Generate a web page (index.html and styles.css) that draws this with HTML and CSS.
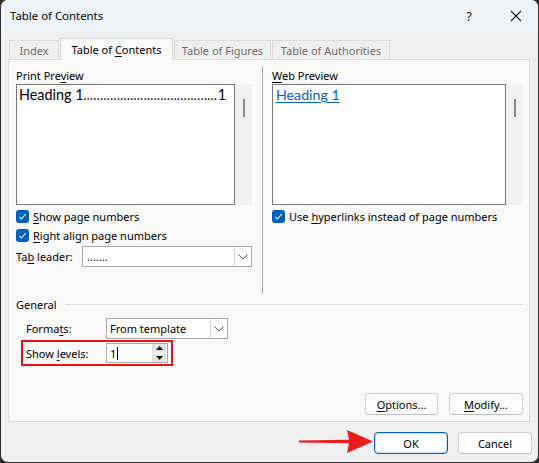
FILE: index.html
```html
<!DOCTYPE html>
<html>
<head>
<meta charset="utf-8">
<link rel="stylesheet" href="styles.css">
</head>
<body>
<div class="dialog">
  <div class="titlebar">
    <span class="title">Table of Contents</span>
    <span class="tb-buttons">
      <span class="help">?</span>
      <svg class="close" width="12" height="12" viewBox="0 0 12 12"><path d="M1 1 L11 11 M11 1 L1 11" stroke="#1a1a1a" stroke-width="1.1" fill="none"/></svg>
    </span>
  </div>
  <div class="content">
    <div class="tabs">
      <div class="tab t1"><span>Index</span></div>
      <div class="tab sel"><span>Table of <u>C</u>ontents</span></div>
      <div class="tab t3"><span>Table of Figures</span></div>
      <div class="tab t4"><span>Table of Authorities</span></div>
    </div>
    <div class="panel">
      <div class="top">
        <div class="col left">
          <div class="label">Print Pre<u>v</u>iew</div>
          <div class="preview">
            <div class="pbox">
              <div class="toc-line"><span>Heading 1</span><span class="dots">........................................</span><span>1</span></div>
            </div>
            <div class="track"><div class="thumb"></div></div>
          </div>
          <div class="check first"><span class="cb"><svg width="9" height="9" viewBox="0 0 9 9"><path d="M1.2 4.8 L3.4 7 L7.8 2" stroke="#fff" stroke-width="1.1" fill="none"/></svg></span><span><u>S</u>how page numbers</span></div>
          <div class="check"><span class="cb"><svg width="9" height="9" viewBox="0 0 9 9"><path d="M1.2 4.8 L3.4 7 L7.8 2" stroke="#fff" stroke-width="1.1" fill="none"/></svg></span><span><u>R</u>ight align page numbers</span></div>
          <div class="row leader">
            <span class="rlabel">Ta<u>b</u> leader:</span>
            <div class="select wide"><span class="val">.......</span><span class="dd"><svg width="10" height="6" viewBox="0 0 10 6"><path d="M0.5 0.5 L5 5 L9.5 0.5" stroke="#555" stroke-width="1" fill="none"/></svg></span></div>
          </div>
        </div>
        <div class="vsep"></div>
        <div class="col right">
          <div class="label"><u>W</u>eb Preview</div>
          <div class="preview">
            <div class="pbox wbox"><span class="link">Heading 1</span></div>
            <div class="track"><div class="thumb"></div></div>
          </div>
          <div class="check first"><span class="cb"><svg width="9" height="9" viewBox="0 0 9 9"><path d="M1.2 4.8 L3.4 7 L7.8 2" stroke="#fff" stroke-width="1.1" fill="none"/></svg></span><span>Use <u>h</u>yperlinks instead of page numbers</span></div>
        </div>
      </div>
      <div class="general">
        <span class="glabel">General</span><span class="gline"></span>
      </div>
      <div class="row formats">
        <span class="flabel">Forma<u>t</u>s:</span>
        <div class="select fsel"><span class="val">From template</span><span class="dd"><svg width="10" height="6" viewBox="0 0 10 6"><path d="M0.5 0.5 L5 5 L9.5 0.5" stroke="#555" stroke-width="1" fill="none"/></svg></span></div>
      </div>
      <div class="levels">
        <span class="llabel">Show <u>l</u>evels:</span>
        <div class="spin">
          <span class="sval">1<span class="caret"></span></span>
          <span class="sbtns">
            <span class="sb"><svg width="7" height="4" viewBox="0 0 7 4"><path d="M0 4 L3.5 0 L7 4 Z" fill="#111"/></svg></span>
            <span class="sb"><svg width="7" height="4" viewBox="0 0 7 4"><path d="M0 0 L3.5 4 L7 0 Z" fill="#111"/></svg></span>
          </span>
        </div>
      </div>
      <div class="pbuttons">
        <span class="btn opt"><span><u>O</u>ptions...</span></span>
        <span class="btn mod"><span><u>M</u>odify...</span></span>
      </div>
    </div>
    <div class="footer">
      <span class="btn ok">OK</span>
      <span class="btn cancel">Cancel</span>
    </div>
  </div>
  <svg class="arrow" width="76" height="24" viewBox="0 0 76 24"><path d="M0 10.6 L50 9.8 L48 0 L74 11.5 L48 23 L50 13.2 L0 12.4 Z" fill="#ee1c1c"/></svg>
</div>
</body>
</html>
```
FILE: styles.css
```css
* { box-sizing: border-box; }
html, body { margin: 0; padding: 0; }
body {
  background: #2e2e2e;
  width: 539px;
  height: 463px;
  overflow: hidden;
  font-family: "Noto Sans", sans-serif;
  font-size: 11px;
  color: #000;
}
u { text-decoration: underline; text-underline-offset: 2px; }
.dialog {
  position: relative;
  margin-left: 1px;
  width: 537px;
  height: 462px;
  background: #f0f0f0;
  border-radius: 7px;
  overflow: hidden;
}
.titlebar {
  height: 33px;
  background: #eef3f8;
  display: flex;
  align-items: center;
  justify-content: space-between;
  padding-left: 9px;
  padding-right: 16px;
  padding-bottom: 2px;
}
.title { font-size: 11.4px; color: #000; }
.tb-buttons { display: flex; align-items: center; }
.help { font-size: 13px; color: #1a1a1a; margin-right: 38px; }
.content { padding: 5px 0 0 0; }
.tabs {
  display: flex;
  padding-left: 8px;
  height: 21px;
  align-items: flex-end;
  position: relative;
  z-index: 2;
}
.tab {
  height: 19px;
  border: 1px solid #dcdcdc;
  border-bottom: none;
  background: #f0f0f0;
  color: #6d6d6d;
  display: flex;
  align-items: center;
  justify-content: center;
  margin-right: 1px;
  white-space: nowrap;
}
.t1 { width: 50px; }
.tab.sel {
  width: 113px;
  height: 22px;
  background: #f9f9f9;
  color: #000;
  margin-bottom: -1px;
  padding-bottom: 1px;
}
.t3 { width: 97px; }
.t4 { width: 118px; }
.panel {
  margin-left: 7px;
  width: 522px;
  height: 363px;
  border: 1px solid #dcdcdc;
  background: #f9f9f9;
  padding: 8px 0 0 7px;
}
.top { display: flex; height: 226px; }
.col.left { width: 236px; }
.col.right { width: 251px; margin-left: 9px; }
.vsep { width: 1px; background: #a9a9a9; margin-left: 10px; margin-top: -1px; height: 226px; }
.label { height: 16px; line-height: 15px; }
.preview { display: flex; height: 121px; }
.pbox {
  flex: 1;
  border: 1px solid #767676;
  background: #fff;
  padding: 1px 0 0 2px;
}
.track { width: 17px; background: #f0f0f0; position: relative; }
.thumb { position: absolute; left: 8px; top: 15px; width: 2px; height: 18px; background: #8a8a8a; }
.toc-line {
  display: flex;
  font-family: Lato, "Noto Sans", sans-serif;
  font-size: 14.4px;
  line-height: 18px;
  width: 207px;
  white-space: nowrap;
  justify-content: space-between;
}
.dots { letter-spacing: -0.05px; color: #3a2a1a; margin-left: -1px; }
.wbox { padding: 1px 0 0 3px; }
.link {
  font-family: Lato, "Noto Sans", sans-serif;
  font-size: 14.2px;
  line-height: 18px;
  color: #0563c1;
  text-decoration: underline;
  text-underline-offset: 2px;
}
.check { display: flex; align-items: center; height: 13px; margin-top: 6px; }
.check.first { margin-top: 5px; }
.cb {
  width: 13px; height: 13px;
  background: #005fb8;
  border-radius: 3px;
  display: flex; align-items: center; justify-content: center;
  margin-right: 4px;
}
.row { display: flex; align-items: center; }
.leader { margin-top: 4px; height: 21px; }
.rlabel { width: 66px; }
.select {
  height: 21px;
  border: 1px solid #a8a8a8;
  background: #fff;
  display: flex;
  align-items: center;
}
.select .val { flex: 1; padding-left: 3px; }
.dd {
  width: 17px; height: 19px;
  border-left: 1px solid #d6d6d6;
  display: flex; align-items: center; justify-content: center;
}
.wide { width: 170px; }
.wide .val { padding-left: 4px; line-height: 10px; }
.general { display: flex; align-items: center; height: 14px; margin-top: 3px; }
.glabel { margin-right: 8px; }
.gline { flex: 1; height: 1px; background: #dcdcdc; margin-right: 6px; }
.formats { margin-top: 7px; height: 21px; padding-left: 10px; }
.flabel { width: 80px; }
.fsel { width: 122px; }
.fsel .val { padding-left: 3px; }
.levels {
  margin-left: 5px;
  margin-top: 1px;
  width: 152px;
  height: 26px;
  border: 2px solid #ee1111;
  display: flex;
  align-items: center;
  padding-left: 3px;
}
.llabel { width: 80px; }
.spin {
  width: 62px; height: 20px;
  border: 1px solid #a8a8a8;
  background: #fff;
  display: flex;
  align-items: center;
}
.sval { flex: 1; padding-left: 3px; display: flex; align-items: center; }
.caret { display: inline-block; width: 1px; height: 13px; background: #000; margin-left: 1px; }
.sbtns { display: flex; flex-direction: column; width: 14px; height: 18px; margin-right: 1px; gap: 1px; }
.sb { flex: 1; background: #e3e3e3; display: flex; align-items: center; justify-content: center; }
.pbuttons { display: flex; justify-content: flex-end; margin-top: 27px; padding-right: 6px; gap: 11px; }
.btn {
  height: 22px;
  border: 1px solid #d0d0d0;
  border-bottom-color: #bdbdbd;
  border-radius: 4px;
  background: #fdfdfd;
  display: flex; align-items: center; justify-content: center;
}
.opt { width: 73px; }
.mod { width: 74px; }
.footer { display: flex; justify-content: flex-end; padding-right: 6px; margin-top: 10px; gap: 10px; }
.ok { width: 74px; height: 22px; border: 1px solid #005fb8; box-shadow: inset 0 0 0 1px #cfe2f5; }
.cancel { width: 74px; height: 22px; }
.arrow { position: absolute; left: 298px; top: 430px; }
```
